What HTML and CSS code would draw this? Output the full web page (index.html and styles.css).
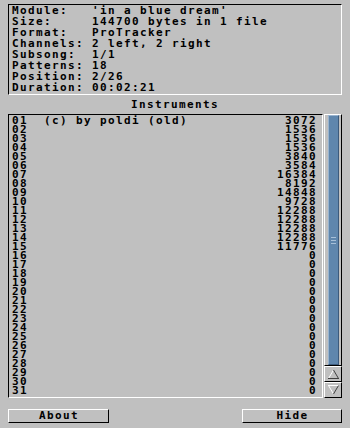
FILE: index.html
```html
<!DOCTYPE html>
<html>
<head>
<meta charset="utf-8">
<link rel="stylesheet" href="styles.css">
</head>
<body>
<div class="win">
  <div class="info sunken">
    <div class="irow"><span class="k">Module:</span><span class="v">'in a blue dream'</span></div>
    <div class="irow"><span class="k">Size:</span><span class="v">144700 bytes in 1 file</span></div>
    <div class="irow"><span class="k">Format:</span><span class="v">ProTracker</span></div>
    <div class="irow"><span class="k">Channels:</span><span class="v">2 left, 2 right</span></div>
    <div class="irow"><span class="k">Subsong:</span><span class="v">1/1</span></div>
    <div class="irow"><span class="k">Patterns:</span><span class="v">18</span></div>
    <div class="irow"><span class="k">Position:</span><span class="v">2/26</span></div>
    <div class="irow"><span class="k">Duration:</span><span class="v">00:02:21</span></div>
  </div>
  <div class="title">Instruments</div>
  <div class="listwrap">
    <div class="list sunken">
      <div class="lrow"><span class="n">01</span><span class="name">(c) by poldi (old)</span><span class="sz">3072</span></div>
      <div class="lrow"><span class="n">02</span><span class="name"></span><span class="sz">1536</span></div>
      <div class="lrow"><span class="n">03</span><span class="name"></span><span class="sz">1536</span></div>
      <div class="lrow"><span class="n">04</span><span class="name"></span><span class="sz">1536</span></div>
      <div class="lrow"><span class="n">05</span><span class="name"></span><span class="sz">3840</span></div>
      <div class="lrow"><span class="n">06</span><span class="name"></span><span class="sz">3584</span></div>
      <div class="lrow"><span class="n">07</span><span class="name"></span><span class="sz">16384</span></div>
      <div class="lrow"><span class="n">08</span><span class="name"></span><span class="sz">8192</span></div>
      <div class="lrow"><span class="n">09</span><span class="name"></span><span class="sz">14848</span></div>
      <div class="lrow"><span class="n">10</span><span class="name"></span><span class="sz">9728</span></div>
      <div class="lrow"><span class="n">11</span><span class="name"></span><span class="sz">12288</span></div>
      <div class="lrow"><span class="n">12</span><span class="name"></span><span class="sz">12288</span></div>
      <div class="lrow"><span class="n">13</span><span class="name"></span><span class="sz">12288</span></div>
      <div class="lrow"><span class="n">14</span><span class="name"></span><span class="sz">12288</span></div>
      <div class="lrow"><span class="n">15</span><span class="name"></span><span class="sz">11776</span></div>
      <div class="lrow"><span class="n">16</span><span class="name"></span><span class="sz">0</span></div>
      <div class="lrow"><span class="n">17</span><span class="name"></span><span class="sz">0</span></div>
      <div class="lrow"><span class="n">18</span><span class="name"></span><span class="sz">0</span></div>
      <div class="lrow"><span class="n">19</span><span class="name"></span><span class="sz">0</span></div>
      <div class="lrow"><span class="n">20</span><span class="name"></span><span class="sz">0</span></div>
      <div class="lrow"><span class="n">21</span><span class="name"></span><span class="sz">0</span></div>
      <div class="lrow"><span class="n">22</span><span class="name"></span><span class="sz">0</span></div>
      <div class="lrow"><span class="n">23</span><span class="name"></span><span class="sz">0</span></div>
      <div class="lrow"><span class="n">24</span><span class="name"></span><span class="sz">0</span></div>
      <div class="lrow"><span class="n">25</span><span class="name"></span><span class="sz">0</span></div>
      <div class="lrow"><span class="n">26</span><span class="name"></span><span class="sz">0</span></div>
      <div class="lrow"><span class="n">27</span><span class="name"></span><span class="sz">0</span></div>
      <div class="lrow"><span class="n">28</span><span class="name"></span><span class="sz">0</span></div>
      <div class="lrow"><span class="n">29</span><span class="name"></span><span class="sz">0</span></div>
      <div class="lrow"><span class="n">30</span><span class="name"></span><span class="sz">0</span></div>
      <div class="lrow"><span class="n">31</span><span class="name"></span><span class="sz">0</span></div>
    </div>
    <div class="scroll">
      <div class="track raised">
        <div class="thumb">
          <div class="grip"><i></i><i></i><i></i></div>
        </div>
      </div>
      <div class="arrow raised">
        <svg width="16" height="14" viewBox="0 0 16 14">
          <path d="M3.5 11.5 L8.5 3 " stroke="#ffffff" stroke-width="1" fill="none"/>
          <path d="M8.5 3 L13.5 11.5" stroke="#404040" stroke-width="1" fill="none"/>
          <path d="M3 11.5 H14" stroke="#404040" stroke-width="1" fill="none"/>
        </svg>
      </div>
      <div class="arrow raised">
        <svg width="16" height="14" viewBox="0 0 16 14">
          <path d="M3 2.5 H14" stroke="#ffffff" stroke-width="1" fill="none"/>
          <path d="M3.5 2.5 L8.5 11" stroke="#ffffff" stroke-width="1" fill="none"/>
          <path d="M8.5 11 L13.5 2.5" stroke="#404040" stroke-width="1" fill="none"/>
        </svg>
      </div>
    </div>
  </div>
  <div class="buttons">
    <div class="btn raised">About</div>
    <div class="btn raised">Hide</div>
  </div>
</div>
</body>
</html>
```

FILE: styles.css
```css
html, body {
  margin: 0;
  padding: 0;
}
body {
  width: 350px;
  height: 428px;
  background: #c0c0c0;
  overflow: hidden;
  font-family: "DejaVu Sans Mono", monospace;
  font-weight: bold;
  font-size: 11px;
  letter-spacing: 1.38px;
  color: #000;
}
.win {
  padding: 4px 8px 0 8px;
  display: flex;
  flex-direction: column;
}
.sunken {
  border-top: 1px solid #000;
  border-left: 1px solid #000;
  border-right: 1px solid #fff;
  border-bottom: 1px solid #fff;
}
.raised {
  border-top: 1px solid #fff;
  border-left: 1px solid #fff;
  border-right: 1px solid #000;
  border-bottom: 1px solid #000;
}
.info {
  height: 89px;
  padding: 0 0 0 3px;
}
.irow {
  display: flex;
  height: 11px;
  line-height: 11px;
  white-space: pre;
}
.k {
  width: 80px;
  flex: none;
}
.title {
  height: 18px;
  padding-top: 1px;
  line-height: 18px;
  text-align: center;
}
.listwrap {
  display: flex;
  gap: 1px;
  height: 284px;
  align-items: flex-start;
}
.list {
  width: 305px;
  height: 281px;
  padding: 1px 5px 0 3px;
  flex: none;
  display: flex;
  flex-direction: column;
}
.lrow {
  display: flex;
  height: 9px;
  line-height: 9px;
  white-space: pre;
}
.n {
  width: 32px;
  flex: none;
}
.name {
  flex: 1;
}
.sz {
  text-align: right;
}
.scroll {
  width: 18px;
  display: flex;
  flex-direction: column;
}
.track {
  height: 250px;
  padding: 0 2px 0 3px;
  display: flex;
}
.thumb {
  width: 9px;
  flex: none;
  background: #5f86ad;
  border-left: 1px solid #9ab4cf;
  border-top: 1px solid #9ab4cf;
  border-right: 1px solid #3c5a7c;
  border-bottom: 1px solid #3c5a7c;
  display: flex;
  align-items: center;
  justify-content: center;
}
.grip {
  display: flex;
  flex-direction: column;
  gap: 2px;
  width: 5px;
}
.grip i {
  display: block;
  height: 1px;
  background: #a8c0d8;
}
.arrow {
  height: 14px;
}
.arrow svg {
  display: block;
}
.buttons {
  display: flex;
  justify-content: space-between;
  margin-top: 11px;
}
.btn {
  height: 12px;
  line-height: 12px;
  text-align: center;
  padding-left: 1px;
}
.btn:first-child {
  width: 98px;
}
.btn:last-child {
  width: 97px;
}
```
